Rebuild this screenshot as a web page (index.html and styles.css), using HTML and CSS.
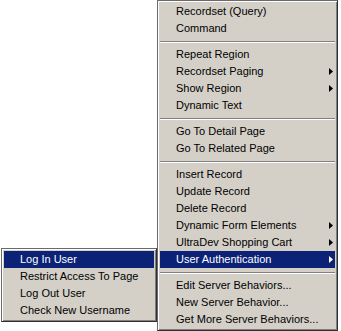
FILE: index.html
```html
<!DOCTYPE html>
<html>
<head>
    <title>Server Behaviors Menu</title>
    <link rel="stylesheet" href="styles.css">
</head>
<body>
    <div class="menu main-menu">
        <div class="item">Recordset (Query)</div>
        <div class="item">Command</div>
        <div class="sep"></div>
        <div class="item">Repeat Region</div>
        <div class="item sub">Recordset Paging</div>
        <div class="item sub">Show Region</div>
        <div class="item">Dynamic Text</div>
        <div class="sep"></div>
        <div class="item">Go To Detail Page</div>
        <div class="item">Go To Related Page</div>
        <div class="sep"></div>
        <div class="item">Insert Record</div>
        <div class="item">Update Record</div>
        <div class="item">Delete Record</div>
        <div class="item sub">Dynamic Form Elements</div>
        <div class="item sub">UltraDev Shopping Cart</div>
        <div class="item sub active">User Authentication</div>
        <div class="sep"></div>
        <div class="item">Edit Server Behaviors...</div>
        <div class="item">New Server Behavior...</div>
        <div class="item">Get More Server Behaviors...</div>
    </div>

    <div class="menu sub-menu">
        <div class="item active">Log In User</div>
        <div class="item">Restrict Access To Page</div>
        <div class="item">Log Out User</div>
        <div class="item">Check New Username</div>
    </div>
</body>
</html>
```

FILE: styles.css
```css
body {
    margin: 0;
    background: #fff;
    font-family: "Liberation Sans", Arial, sans-serif;
    font-size: 11px;
    color: #000;
    width: 341px;
    height: 331px;
    position: relative;
    overflow: hidden;
}
.menu {
    position: absolute;
    background: #d4d0c8;
    border: 1px solid;
    border-color: #6a6a6a #303030 #303030 #6a6a6a;
    box-shadow: inset 1px 1px #fff, inset -1px -1px #808080;
    padding: 2px;
}
.main-menu {
    left: 157px;
    top: 0;
    width: 175px;
}
.sub-menu {
    left: 1px;
    top: 248px;
    width: 150px;
    z-index: 2;
}
.item {
    position: relative;
    height: 17px;
    line-height: 17px;
    padding-left: 16px;
    white-space: nowrap;
}
.item.sub::after {
    content: "";
    position: absolute;
    right: 2px;
    top: 5px;
    width: 4px;
    height: 7px;
    background: currentColor;
    clip-path: polygon(0 0, 100% 50%, 0 100%);
}
.item.active {
    background: #0b2276;
    color: #fff;
}
.sep {
    height: 0;
    margin: 4px 0 3px;
    border-top: 1px solid #808080;
    border-bottom: 1px solid #fff;
}
```
